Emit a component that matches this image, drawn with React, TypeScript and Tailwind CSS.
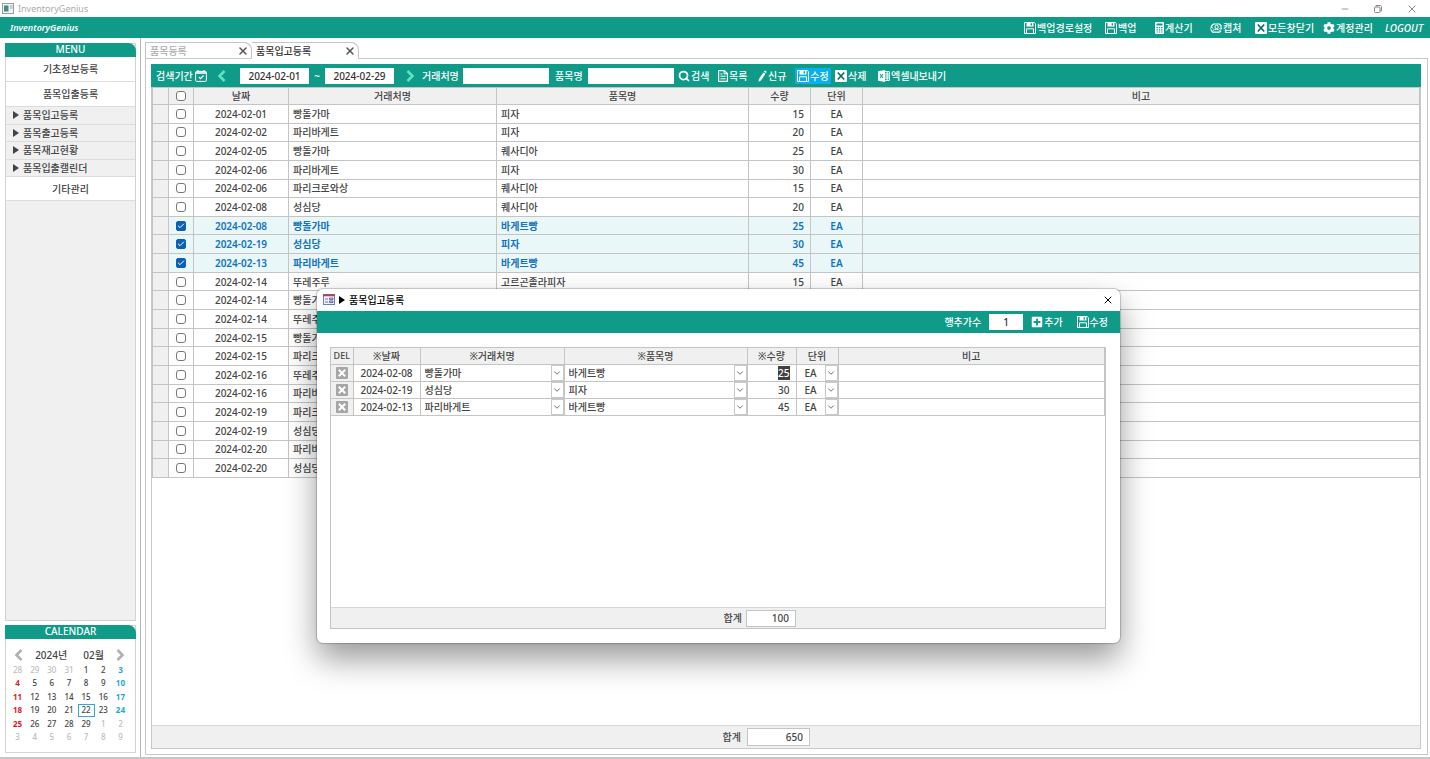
import React, { useEffect, useRef } from "react";
import clsx from "clsx";
import { FaCog, FaPlusSquare } from "react-icons/fa";
import { Check, ChevronDown, Minus, Search, X } from "lucide-react";

const records = [
  ["2024-02-01", "빵돌가마", "피자", 15],
  ["2024-02-02", "파리바게트", "피자", 20],
  ["2024-02-05", "빵돌가마", "퀘사디아", 25],
  ["2024-02-06", "파리바게트", "피자", 30],
  ["2024-02-06", "파리크로와상", "퀘사디아", 15],
  ["2024-02-08", "성심당", "퀘사디아", 20],
  ["2024-02-08", "빵돌가마", "바게트빵", 25, true],
  ["2024-02-19", "성심당", "피자", 30, true],
  ["2024-02-13", "파리바게트", "바게트빵", 45, true],
  ["2024-02-14", "뚜레주루", "고르곤졸라피자", 15],
  ["2024-02-14", "빵돌가마", "피자", 40],
  ["2024-02-14", "뚜레주루", "바게트빵", 35],
  ["2024-02-15", "빵돌가마", "피자", 50],
  ["2024-02-15", "파리크로와상", "피자", 45],
  ["2024-02-16", "뚜레주루", "피자", 30],
  ["2024-02-16", "파리바게트", "바게트빵", 40],
  ["2024-02-19", "파리크로와상", "피자", 50],
  ["2024-02-19", "성심당", "바게트빵", 40],
  ["2024-02-20", "파리바게트", "피자", 40],
  ["2024-02-20", "성심당", "퀘사디아", 40],
] as [string, string, string, number, boolean?][];

const editing = records.filter((r) => r[4]);

const weeks = [
  [28, 29, 30, 31, 1, 2, 3],
  [4, 5, 6, 7, 8, 9, 10],
  [11, 12, 13, 14, 15, 16, 17],
  [18, 19, 20, 21, 22, 23, 24],
  [25, 26, 27, 28, 29, 1, 2],
  [3, 4, 5, 6, 7, 8, 9],
];

const SaveIcon = () => (
  <svg viewBox="0 0 12 12" className="size-3 shrink-0" fill="none" stroke="currentColor">
    <path d="M.5.5h9.8l1.2 1.2v9.8H.5z" />
    <path d="M2.5 0h7v4.6h-7z" fill="currentColor" stroke="none" />
    <path d="M6.6 1.2h1.4v2.2H6.6z" fill="#109b89" stroke="none" />
    <path d="M2.5 11V6.8h7V11" />
  </svg>
);

const XBox = () => (
  <svg viewBox="0 0 12 12" className="size-3 shrink-0">
    <rect width="12" height="12" rx="1" fill="currentColor" />
    <path d="M2.8 2.5l6.4 7M9.2 2.5l-6.4 7" stroke="#0d6f63" strokeWidth="1.7" />
  </svg>
);

const DeleteMark = () => (
  <svg viewBox="0 0 12 12" className="size-3">
    <rect width="12" height="12" rx="1" fill="#a6a6a6" />
    <path d="M2.8 2.8l6.4 6.4M9.2 2.8L2.8 9.2" stroke="#fff" strokeWidth="2" />
  </svg>
);

const CalculatorIcon = () => (
  <svg viewBox="0 0 9 12" className="h-3 w-[9px] shrink-0">
    <rect width="9" height="12" rx="1" fill="currentColor" />
    <path
      d="M1.5 1.5h6v2h-6zM1.5 5h1.4v1.2H1.5zM3.8 5h1.4v1.2H3.8zM6.1 5h1.4v1.2H6.1zM1.5 7.2h1.4v1.2H1.5zM3.8 7.2h1.4v1.2H3.8zM6.1 7.2h1.4v1.2H6.1zM1.5 9.4h1.4v1.2H1.5zM3.8 9.4h1.4v1.2H3.8zM6.1 9.4h1.4v1.2H6.1z"
      fill="#109b89"
    />
  </svg>
);

const CaptureIcon = () => (
  <svg viewBox="0 0 12 12" className="size-3 shrink-0" fill="none" stroke="currentColor">
    <path d="M1.4 5.6V4L3.4 2h6l1.6 1.6v3M.8 7.4l1.8 2.8h7l1.4-1.6" strokeWidth="1.2" />
    <circle cx="6.6" cy="5" r="1.7" />
    <path d="M3 8.4c1.4-1.4 5.4-1.4 6.6 0M0 6.8l1.6-2L3 6.6M9.6 6l1.4 1.6L12 6" />
  </svg>
);

const ListIcon = () => (
  <svg viewBox="0 0 10 12" className="h-3 w-2.5 shrink-0" fill="none" stroke="currentColor">
    <path d="M.6.6h5.6l3.2 3v7.8H.6z" strokeWidth="1.2" />
    <path d="M6 .6v3.2h3.4M2.4 4h2M2.4 6.2h5.2M2.4 8.8h5.2" />
  </svg>
);

const PencilIcon = () => (
  <svg viewBox="0 0 9 12" className="h-3 w-[9px] shrink-0" fill="currentColor">
    <path d="M6.8.4L8.8 1.8 8 3 5.9 1.7zM5.4 2.4l2.1 1.4-4.6 6.6L.6 11.8.9 9.1z" />
  </svg>
);

const ExcelIcon = () => (
  <svg viewBox="0 0 12 12" className="size-3 shrink-0" fill="none">
    <path d="M0 1.2L7 0v12L0 10.8z" fill="currentColor" />
    <path d="M7 1.6h4.4v8.8H7M7 4h4M7 6h4M7 8h4M9.2 2v8" stroke="currentColor" />
    <path d="M2 4l3 4M5 4L2 8" stroke="#109b89" strokeWidth="1.1" />
  </svg>
);

const CalendarIcon = () => (
  <svg viewBox="0 0 12 12" className="size-3 shrink-0" fill="none" stroke="currentColor">
    <rect x=".6" y="1.4" width="10.8" height="10" rx="1" />
    <path d="M.6 3h10.8" strokeWidth="1.6" />
    <path d="M3 0v2M9 0v2M3.8 7l1.7 1.7 3-3.2" strokeWidth="1.2" />
  </svg>
);

const Arrow = ({ right }: { right?: boolean }) => (
  <svg viewBox="0 0 9 12" className="h-3 w-[9px]" fill="none" stroke="currentColor" strokeWidth="2.6">
    <path d={right ? "M1.5 1L6.5 6l-5 5" : "M7.5 1l-5 5 5 5"} />
  </svg>
);

const Triangle = () => (
  <svg viewBox="0 0 6 8" className="h-2 w-1.5" fill="currentColor">
    <path d="M0 0l6 4-6 4z" />
  </svg>
);

const AppIcon = () => (
  <svg viewBox="0 0 12 11" className="h-[11px] w-3">
    <rect x=".5" y=".5" width="11" height="10" fill="#f4f4f4" stroke="#9a9a9a" />
    <rect x="2" y="2.5" width="4.5" height="6" fill="#3c8a80" />
    <path d="M8 3h2.5M8 5h2.5" stroke="#9a9a9a" />
  </svg>
);

const FormIcon = () => (
  <svg viewBox="0 0 12 11" className="h-[11px] w-3">
    <rect x=".5" y=".5" width="11" height="10" fill="#f3f3fb" stroke="#7d78a8" />
    <path d="M0 1.2h12" stroke="#b0435c" strokeWidth="2" />
    <path d="M2 5h3M2 8h3" stroke="#6a6fc0" />
    <path d="M6.5 4h3.5v1.6H6.5zM6.5 7h3.5v1.6H6.5z" fill="#cfd3f2" stroke="#4a50a8" strokeWidth=".8" />
  </svg>
);

const RestoreIcon = () => (
  <svg viewBox="0 0 8 8" className="size-2" fill="none" stroke="currentColor">
    <rect x=".5" y="2" width="5.5" height="5.5" rx="1" />
    <path d="M2 2V.5h4.5l1 1V6H6" />
  </svg>
);

const ToolButton = ({
  icon,
  label,
  className,
}: {
  icon: React.ReactNode;
  label: string;
  className?: string;
}) => (
  <button className={clsx("flex h-4 items-center gap-px whitespace-nowrap", className)}>
    {icon}
    <span>{label}</span>
  </button>
);

const CheckBox = ({ checked, label }: { checked?: boolean; label: string }) => (
  <span className="relative mx-auto block size-2.5">
    <input
      type="checkbox"
      defaultChecked={checked}
      aria-label={label}
      className="peer block size-2.5 appearance-none rounded-[3px] border border-[#777] bg-white checked:rounded-[2px] checked:border-[#0b62b5] checked:bg-[#0b62b5]"
    />
    <Check
      className="pointer-events-none absolute inset-px hidden size-2 text-white peer-checked:block"
      strokeWidth={3}
    />
  </span>
);

const Tab = ({ label, active }: { label: string; active?: boolean }) => (
  <div
    className={clsx(
      "flex h-4 w-[107px] items-center justify-between rounded-tr-lg border border-b-0 border-[#c4c4c4] pr-0.5 pl-1",
      active && "-mb-px h-[17px] border-l-0 bg-white",
    )}
  >
    <button role="tab" aria-selected={!!active} className={active ? "text-[#333]" : "text-[#aaa]"}>
      {label}
    </button>
    <button aria-label={`${label} 닫기`}>
      <X className="size-3 text-[#555]" strokeWidth={3} />
    </button>
  </div>
);

const Sidebar = () => (
  <aside className="flex w-[141px] shrink-0 flex-col gap-1 border-r border-[#b5b5b5] pt-[5px] pr-1 pb-1 pl-[5px]">
    <nav className="flex flex-1 flex-col border border-[#d2d2d2] bg-[#f0f0f0]">
      <h2 className="-mx-px -mt-px h-3.5 rounded-tr-lg bg-[#109b89] text-center leading-[13px] text-white">
        MENU
      </h2>
      <button className="h-[25px] border-b border-[#dcdcdc] bg-white">기초정보등록</button>
      <button className="h-[25px] border-b border-[#dcdcdc] bg-white">품목입출등록</button>
      <div className="grid h-[70px] grid-rows-4">
        {["품목입고등록", "품목출고등록", "품목재고현황", "품목입출캘린더"].map((item) => (
          <button key={item} className="flex items-center gap-1 border-b border-[#dcdcdc] pl-[7px] text-left">
            <Triangle />
            {item}
          </button>
        ))}
      </div>
      <button className="h-6 border-b border-[#dcdcdc] bg-white">기타관리</button>
    </nav>

    <section className="flex h-[128px] flex-col border border-[#d2d2d2]">
      <h2 className="-mx-px -mt-px h-3.5 rounded-tr-lg bg-[#109b89] text-center leading-[13px] text-white">
        CALENDAR
      </h2>
      <div className="mt-2 flex h-4 items-center justify-between pr-2.5 pl-2">
        <button aria-label="이전 달" className="text-[#b0b0b0]">
          <Arrow />
        </button>
        <span className="flex gap-4">
          <span>2024년</span>
          <span>02월</span>
        </span>
        <button aria-label="다음 달" className="text-[#b0b0b0]">
          <Arrow right />
        </button>
      </div>
      <table className="mr-1.5 ml-[3px] h-[81px] table-fixed text-center text-[8px] leading-3">
        <tbody>
          {weeks.map((week, w) => (
            <tr key={w}>
              {week.map((day, d) => {
                const outside = (w === 0 && day > 7) || (w > 3 && day < 10);
                return (
                  <td
                    key={d}
                    className={clsx(
                      "p-0",
                      outside && "text-[#bdbdbd]",
                      !outside && d === 0 && "font-bold text-[#e01b24]",
                      !outside && d === 6 && "font-bold text-[#1ba7dc]",
                      w === 3 && day === 22 && "outline -outline-offset-1 outline-[#2fa9d6]",
                    )}
                  >
                    {day}
                  </td>
                );
              })}
            </tr>
          ))}
        </tbody>
      </table>
    </section>
  </aside>
);

const RecordTable = () => (
  <table className="h-[391px] w-full table-fixed border-collapse">
    <colgroup>
      <col className="w-4" />
      <col className="w-[25px]" />
      <col className="w-[95px]" />
      <col className="w-[208px]" />
      <col className="w-[252px]" />
      <col className="w-[62px]" />
      <col className="w-[52px]" />
      <col />
    </colgroup>
    <thead>
      <tr className="h-[17px] bg-[#f0f0f0] [&>th]:border [&>th]:border-[#c4c4c4] [&>th]:p-0 [&>th]:font-medium">
        <th />
        <th>
          <CheckBox label="전체 선택" />
        </th>
        <th>날짜</th>
        <th>거래처명</th>
        <th>품목명</th>
        <th>수량</th>
        <th>단위</th>
        <th>비고</th>
      </tr>
    </thead>
    <tbody>
      {records.map(([date, vendor, item, qty, selected], i) => (
        <tr
          key={i}
          className={clsx(
            "[&>td]:border [&>td]:border-[#c4c4c4] [&>td]:py-0",
            selected && "bg-[#eaf7f8] font-semibold text-[#1173c0]",
          )}
        >
          <td className="bg-[#f0f0f0]" />
          <td className="px-0">
            <CheckBox checked={selected} label={`${date} ${vendor}`} />
          </td>
          <td className="px-0 text-center">{date}</td>
          <td className="px-1">{vendor}</td>
          <td className="px-1">{item}</td>
          <td className="px-1.5 text-right">{qty}</td>
          <td className="px-0 text-center">EA</td>
          <td />
        </tr>
      ))}
    </tbody>
  </table>
);

const Combo = ({ value, label }: { value: string; label: string }) => (
  <div className="relative flex h-4 items-center">
    <select defaultValue={value} aria-label={label} className="h-4 w-full appearance-none bg-transparent pl-1">
      <option>{value}</option>
    </select>
    <span className="pointer-events-none absolute top-0 right-0 flex h-4 w-[13px] items-center justify-center border border-[#c8c8c8] bg-white">
      <ChevronDown className="size-2.5 text-[#555]" />
    </span>
  </div>
);

const EditDialog = () => {
  const qtyRef = useRef<HTMLInputElement>(null);

  useEffect(() => {
    qtyRef.current?.focus();
    qtyRef.current?.select();
  }, []);

  return (
    <div
      role="dialog"
      aria-label="품목입고등록"
      className="absolute top-[289px] left-[317px] flex h-[354px] w-[803px] flex-col overflow-hidden rounded-md bg-white shadow-[0_0_1px_1px_rgba(0,0,0,0.2),0_16px_32px_0_rgba(0,0,0,0.4)]"
    >
      <div className="flex h-[22px] shrink-0 items-center gap-1 px-1.5 pb-px text-black">
        <FormIcon />
        <Triangle />
        <span className="flex-1">품목입고등록</span>
        <button aria-label="닫기">
          <X className="size-3" />
        </button>
      </div>
      <div className="flex h-[22px] shrink-0 items-center justify-end bg-[#109b89] pr-3 text-white">
        <label htmlFor="rowCount" className="mr-2">
          행추가수
        </label>
        <input id="rowCount" defaultValue="1" className="mr-2 h-4 w-[34px] bg-white text-center text-[#333]" />
        <ToolButton icon={<FaPlusSquare className="size-3" />} label="추가" className="mr-3.5" />
        <ToolButton icon={<SaveIcon />} label="수정" />
      </div>
      <div className="mx-3.5 mt-3.5 mb-3.5 ml-[13px] flex flex-1 flex-col border border-[#c4c4c4]">
        <table className="w-full table-fixed border-collapse">
          <colgroup>
            <col className="w-[22px]" />
            <col className="w-[67px]" />
            <col className="w-[144px]" />
            <col className="w-[183px]" />
            <col className="w-[49px]" />
            <col className="w-[42px]" />
            <col />
          </colgroup>
          <thead>
            <tr className="h-4 bg-[#f0f0f0] [&>th]:border-r [&>th]:border-b [&>th]:border-[#c4c4c4] [&>th]:p-0 [&>th]:font-medium">
              <th className="text-[9px]">DEL</th>
              <th>※날짜</th>
              <th>※거래처명</th>
              <th>※품목명</th>
              <th>※수량</th>
              <th>단위</th>
              <th>비고</th>
            </tr>
          </thead>
          <tbody>
            {editing.map(([date, vendor, item, qty], i) => (
              <tr key={i} className="[&>td]:border-r [&>td]:border-b [&>td]:border-[#c4c4c4] [&>td]:p-0">
                <td className="bg-[#f0f0f0]">
                  <button aria-label={`${date} 삭제`} className="mx-auto block">
                    <DeleteMark />
                  </button>
                </td>
                <td>
                  <input defaultValue={date} aria-label="날짜" className="block h-4 w-full text-center" />
                </td>
                <td>
                  <Combo value={vendor} label="거래처명" />
                </td>
                <td>
                  <Combo value={item} label="품목명" />
                </td>
                <td>
                  <input
                    ref={i === 0 ? qtyRef : undefined}
                    defaultValue={qty}
                    aria-label="수량"
                    className="block h-4 w-full pr-1.5 text-right outline-none selection:bg-[#404040] selection:text-white"
                  />
                </td>
                <td>
                  <div className="pl-1">
                    <Combo value="EA" label="단위" />
                  </div>
                </td>
                <td>
                  <input aria-label="비고" className="block h-4 w-full px-1" />
                </td>
              </tr>
            ))}
          </tbody>
        </table>
        <div className="mt-auto flex h-[21px] items-center border-t border-[#d8d8d8] bg-[#f0f0f0]">
          <label htmlFor="editTotal" className="w-[415px] pr-1 text-right">
            합계
          </label>
          <input
            id="editTotal"
            readOnly
            value="100"
            className="h-[17px] w-[50px] border border-[#c4c4c4] bg-white pr-1.5 text-right"
          />
        </div>
      </div>
    </div>
  );
};

const Toolbar = () => (
  <div className="flex h-[23px] shrink-0 items-center bg-[#109b89] pl-[5px] whitespace-nowrap text-white [&_input]:h-4 [&_input]:bg-white [&_input]:text-center [&_input]:text-[#333]">
    <label htmlFor="from" className="w-[39px]">
      검색기간
    </label>
    <button aria-label="달력">
      <CalendarIcon />
    </button>
    <button aria-label="이전" className="mr-3.5 ml-2.5 text-[#5fe3c0]">
      <Arrow />
    </button>
    <input id="from" defaultValue="2024-02-01" className="w-[69px]" />
    <span className="w-4 text-center">~</span>
    <input aria-label="종료일" defaultValue="2024-02-29" className="w-[69px]" />
    <button aria-label="다음" className="mr-[7px] ml-3 text-[#5fe3c0]">
      <Arrow right />
    </button>
    <label htmlFor="vendor" className="w-[41px]">
      거래처명
    </label>
    <input id="vendor" className="w-[86px]" />
    <label htmlFor="item" className="w-[39px] pl-1.5">
      품목명
    </label>
    <input id="item" className="w-[86px]" />
    <ToolButton icon={<Search className="size-3" strokeWidth={3.5} />} label="검색" className="ml-1 w-10" />
    <ToolButton icon={<ListIcon />} label="목록" className="w-10" />
    <ToolButton icon={<PencilIcon />} label="신규" className="w-[37px]" />
    <ToolButton icon={<SaveIcon />} label="수정" className="w-9 justify-center bg-[#08b0ee]" />
    <ToolButton icon={<XBox />} label="삭제" className="ml-1 w-[43px]" />
    <ToolButton icon={<ExcelIcon />} label="엑셀내보내기" />
  </div>
);

const App = () => {
  return (
    <div className="relative flex h-screen flex-col overflow-hidden border-b-2 border-[#c6c6c6] bg-white font-['Noto_Sans','Noto_Sans_CJK_KR',sans-serif] text-[10px] leading-3 font-medium text-[#444]">
      <div className="flex h-[17px] shrink-0 items-center gap-1 px-0.5 font-normal text-[#aaa]">
        <AppIcon />
        <span className="flex-1 text-[9px]">InventoryGenius</span>
        <div className="flex items-center gap-6 pr-2.5 text-[#888]">
          <button aria-label="최소화">
            <Minus className="size-2.5" />
          </button>
          <button aria-label="복원">
            <RestoreIcon />
          </button>
          <button aria-label="닫기">
            <X className="size-3" />
          </button>
        </div>
      </div>

      <header className="flex h-[21px] shrink-0 items-center bg-[#109b89] pr-[7px] pl-2.5 text-white">
        <h1 className="flex-1 text-[9px] font-semibold italic">InventoryGenius</h1>
        <ToolButton icon={<SaveIcon />} label="백업경로설정" className="w-[81px]" />
        <ToolButton icon={<SaveIcon />} label="백업" className="w-[50px]" />
        <ToolButton icon={<CalculatorIcon />} label="계산기" className="w-[55px]" />
        <ToolButton icon={<CaptureIcon />} label="캡쳐" className="w-[45px]" />
        <ToolButton icon={<XBox />} label="모든창닫기" className="w-[68px]" />
        <ToolButton icon={<FaCog className="size-3" />} label="계정관리" className="w-[62px]" />
        <button className="italic">LOGOUT</button>
      </header>

      <div className="flex min-h-0 flex-1">
        <Sidebar />
        <main className="flex min-w-0 flex-1 flex-col pt-1 pr-0.5 pb-0.5 pl-1">
          <div role="tablist" className="relative flex">
            <Tab label="품목등록" />
            <Tab label="품목입고등록" active />
          </div>
          <div className="flex min-h-0 flex-1 flex-col border border-[#c8c8c8] pt-[5px] pr-1.5 pb-[5px] pl-[5px]">
            <Toolbar />
            <div className="flex min-h-0 flex-1 flex-col border border-t-0 border-[#c8c8c8]">
              <RecordTable />
              <div className="mt-auto flex h-[23px] shrink-0 items-center border-t border-[#d8d8d8] bg-[#f0f0f0]">
                <label htmlFor="total" className="w-[595px] pr-1.5 text-right">
                  합계
                </label>
                <input
                  id="total"
                  readOnly
                  value="650"
                  className="h-[18px] w-[63px] border border-[#c4c4c4] bg-white pr-1.5 text-right"
                />
              </div>
            </div>
          </div>
        </main>
      </div>

      <EditDialog />
    </div>
  );
};

export default App;
